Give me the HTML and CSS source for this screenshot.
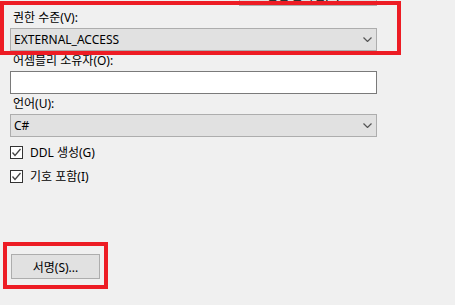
FILE: index.html
```html
<!DOCTYPE html>
<html lang="ko">
<head>
<meta charset="UTF-8" />
<title>어셈블리 속성</title>
<link rel="stylesheet" href="styles.css">
</head>
<body>
  <div class="page">
    <div class="top-row">
      <button class="btn btn-wide" type="button">연결 문자열(C)...</button>
    </div>

    <div class="form">
      <label class="field-label first" for="perm">권한 수준(V):</label>
      <div class="combo" id="perm">
        <span>EXTERNAL_ACCESS</span>
        <svg class="chev" width="9" height="5" viewBox="0 0 9 5"><polyline points="0.5,0.5 4.5,4.5 8.5,0.5" fill="none" stroke="#555" stroke-width="1.2"/></svg>
      </div>

      <label class="field-label" for="owner">어셈블리 소유자(O):</label>
      <input class="textbox" id="owner" type="text" />

      <label class="field-label" for="lang">언어(U):</label>
      <div class="combo" id="lang">
        <span>C#</span>
        <svg class="chev" width="9" height="5" viewBox="0 0 9 5"><polyline points="0.5,0.5 4.5,4.5 8.5,0.5" fill="none" stroke="#555" stroke-width="1.2"/></svg>
      </div>

      <div class="checks">
        <label class="check-row">
          <span class="check-box">
            <svg width="11" height="11" viewBox="0 0 11 11"><polyline points="1.5,5.5 4,8.5 9.5,2" fill="none" stroke="#444" stroke-width="1.3"/></svg>
          </span>
          DDL 생성(G)
        </label>
        <label class="check-row">
          <span class="check-box">
            <svg width="11" height="11" viewBox="0 0 11 11"><polyline points="1.5,5.5 4,8.5 9.5,2" fill="none" stroke="#444" stroke-width="1.3"/></svg>
          </span>
          기호 포함(I)
        </label>
      </div>

      <div class="bottom-row">
        <button class="btn btn-sign" type="button">서명(S)...</button>
      </div>
    </div>

    <!-- annotation boxes drawn over the dialog -->
    <div class="mark mark-perm"></div>
    <div class="mark mark-sign"></div>
  </div>
</body>
</html>
```

FILE: styles.css
```css
:root {
  --dlg-bg: #f0f0f0;
  --ctl-bg: #e1e1e1;
  --ctl-border: #adadad;
  --box-border: #7a7a7a;
  --mark-red: #ed1c24;
}
html, body {
  margin: 0;
  padding: 0;
  background: var(--dlg-bg);
}
body {
  font-family: "Segoe UI", "Noto Sans", "Noto Sans CJK KR", sans-serif;
  font-size: 12px;
  color: #000;
  width: 455px;
  height: 305px;
  overflow: hidden;
}
.page {
  position: relative;
  display: flow-root;
  height: 305px;
}
.top-row {
  display: flex;
  justify-content: flex-end;
  width: 377px;
  margin-top: -17px;
}
.btn {
  font-family: inherit;
  font-size: 12px;
  color: #000;
  background: var(--ctl-bg);
  border: 1px solid var(--ctl-border);
  padding: 0;
  margin: 0;
  box-sizing: border-box;
}
.btn-wide {
  width: 138px;
  height: 23px;
}
.form {
  display: flex;
  flex-direction: column;
  width: 367px;
  margin-left: 10px;
}
.field-label {
  display: block;
  line-height: 16px;
  padding: 2px 0 0 3px;
  margin-bottom: 2px;
}
.field-label.first {
  padding-top: 4px;
}
.combo {
  box-sizing: border-box;
  height: 23px;
  background: var(--ctl-bg);
  border: 1px solid var(--ctl-border);
  display: flex;
  align-items: center;
  justify-content: space-between;
  padding: 0 4px 0 3px;
}
.textbox {
  box-sizing: border-box;
  height: 23px;
  width: 100%;
  margin: 0;
  background: #fff;
  border: 1px solid var(--box-border);
  outline: none;
}
.checks {
  display: flex;
  flex-direction: column;
  margin-top: 3px;
}
.check-row {
  display: flex;
  align-items: center;
  gap: 7px;
  height: 24px;
}
.check-box {
  box-sizing: border-box;
  width: 13px;
  height: 13px;
  border: 1px solid #333;
  background: #fff;
  display: flex;
  align-items: center;
  justify-content: center;
}
.bottom-row {
  margin-top: 66px;
}
.btn-sign {
  width: 89px;
  height: 25px;
  margin-left: 1px;
}
.mark {
  position: absolute;
  box-sizing: border-box;
  border: 4px solid var(--mark-red);
}
.mark-perm {
  left: 0;
  top: 1px;
  width: 401px;
  height: 54px;
}
.mark-sign {
  left: 3px;
  top: 242px;
  width: 105px;
  height: 47px;
}
```
